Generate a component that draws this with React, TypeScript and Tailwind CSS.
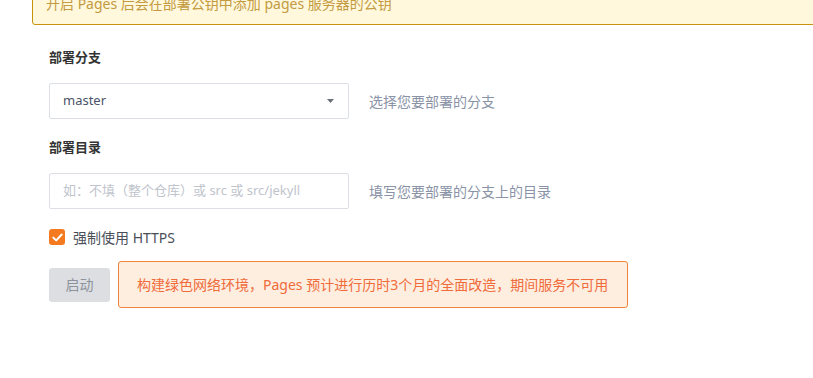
import React from "react";

export default function App() {
  const font = { fontFamily: '"Noto Sans", "Noto Sans CJK SC", sans-serif' };
  return (
    <div className="w-[813px] h-[378px] overflow-hidden bg-white" style={font}>
      <div className="ml-[32px] -mt-[19px] h-[44px] w-[800px] border border-[#c9920e] rounded-[3px] bg-[#fff8dc] flex items-center pl-[13px] text-[14px] text-[#c39a3f]">
        开启 Pages 后会在部署公钥中添加 pages 服务器的公钥
      </div>
      <div className="pl-[49px]">
        <div className="mt-[24px] h-[18px] flex items-center text-[13px] font-bold text-[#333]">部署分支</div>
        <div className="mt-[16px] flex items-center">
          <div className="w-[300px] h-[36px] border border-[#dcdfe6] rounded-[2px] flex items-center justify-between pl-[13px] pr-[14px] text-[13px] text-[#4b5368]">
            <span>master</span>
            <svg width="7" height="4" viewBox="0 0 7 4"><path d="M0 0h7L3.5 4z" fill="#6b6f78" /></svg>
          </div>
          <span className="ml-[20px] text-[14px] text-[#8a93a6]">选择您要部署的分支</span>
        </div>
        <div className="mt-[20px] h-[18px] flex items-center text-[13px] font-bold text-[#333]">部署目录</div>
        <div className="mt-[16px] flex items-center">
          <div className="w-[300px] h-[36px] border border-[#dcdfe6] rounded-[2px] flex items-center pl-[13px] text-[13px] text-[#c0c4cc]">
            如：不填（整个仓库）或 src 或 src/jekyll
          </div>
          <span className="ml-[20px] text-[14px] text-[#8a93a6]">填写您要部署的分支上的目录</span>
        </div>
        <div className="mt-[20px] flex items-center h-[16px]">
          <div className="w-[16px] h-[16px] rounded-[3px] bg-[#f57a1f] flex items-center justify-center">
            <svg width="11" height="9" viewBox="0 0 11 9"><path d="M1.3 4.6l2.9 2.8L9.7 1.5" fill="none" stroke="#fff" strokeWidth="2" strokeLinecap="round" strokeLinejoin="round" /></svg>
          </div>
          <span className="ml-[8px] text-[14px] text-[#4a4f5a]">强制使用 HTTPS</span>
        </div>
        <div className="mt-[16px] flex items-center">
          <button className="w-[61px] h-[34px] rounded-[3px] bg-[#dcdee2] text-[14px] text-[#8d939c]">启动</button>
          <div className="ml-[8px] w-[510px] h-[47px] border border-[#f2853a] rounded-[3px] bg-[#fdeee0] flex items-center pl-[18px] text-[14px] text-[#f06b3a]">
            构建绿色网络环境，Pages 预计进行历时3个月的全面改造，期间服务不可用
          </div>
        </div>
      </div>
    </div>
  );
}
